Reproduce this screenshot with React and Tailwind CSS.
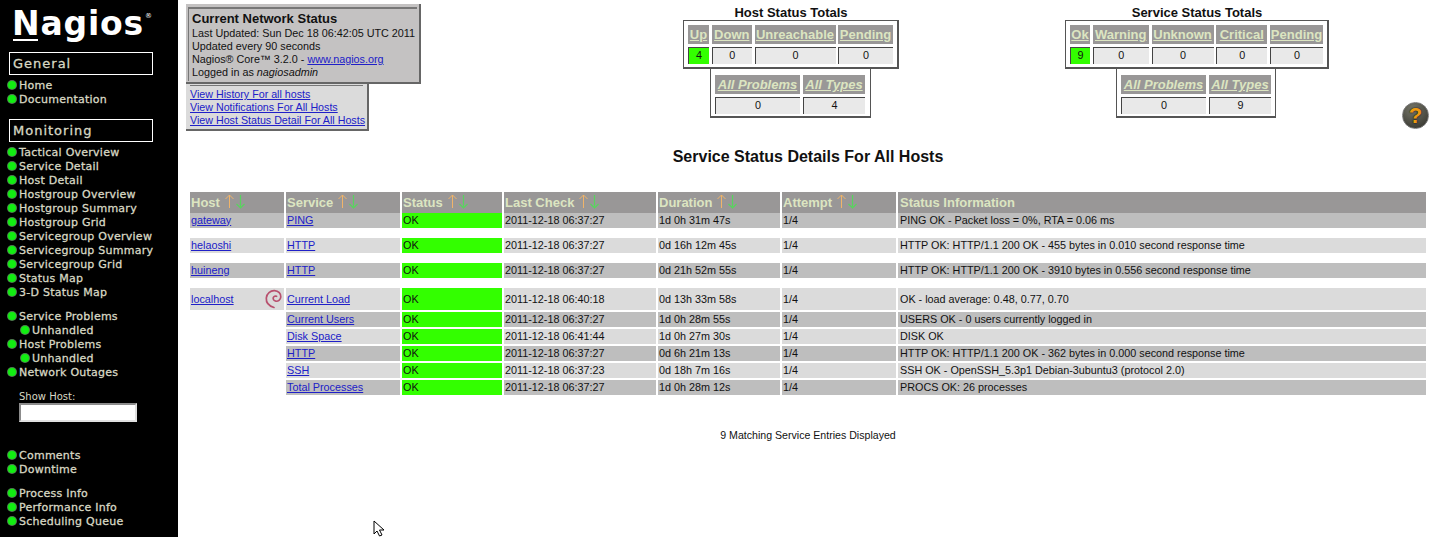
import React from 'react';

const navFont = "font-['DejaVu_Sans',sans-serif]";

const Bullet = () => (
  <span className="w-[8px] h-[8px] rounded-full bg-[#12ee12] shadow-[0_0_0_1px_#4f7f4f] shrink-0 -mt-[3px]"></span>
);

const NavItem = ({ label, sub }) => (
  <div className={`flex items-center h-[14px] gap-[3px] ${sub ? 'pl-[21px]' : 'pl-[8px]'}`}>
    <Bullet />
    <span className="text-[11px] leading-[14px] tracking-[0.25px] [-webkit-text-stroke:0.3px] text-[#d8d8c4] whitespace-nowrap">{label}</span>
  </div>
);

const NavHeader = ({ label }) => (
  <div className="ml-[9px] w-[144px] h-[23px] border border-white flex items-center pl-[3px] text-[13px] tracking-[1px] [-webkit-text-stroke:0.3px] text-[#d8d8c4]">
    {label}
  </div>
);

const Sidebar = () => (
  <div className={`w-[178px] h-[537px] shrink-0 bg-black overflow-hidden ${navFont}`}>
    <div className="relative h-[52px] pl-[12px] pt-[4px]">
      <span className="text-[33px] leading-[40px] font-bold tracking-[0.8px] text-white">Nagios</span>
      <span className="absolute left-[145px] top-[12px] text-[7px] leading-[8px] text-white">®</span>
      <div className="absolute left-[13px] top-[39px] w-[25px] h-[2px] bg-white"></div>
    </div>
    <NavHeader label="General" />
    <div className="mt-[4px]">
      <NavItem label="Home" />
      <NavItem label="Documentation" />
    </div>
    <div className="mt-[12px]">
      <NavHeader label="Monitoring" />
    </div>
    <div className="mt-[4px]">
      {['Tactical Overview', 'Service Detail', 'Host Detail', 'Hostgroup Overview', 'Hostgroup Summary', 'Hostgroup Grid', 'Servicegroup Overview', 'Servicegroup Summary', 'Servicegroup Grid', 'Status Map', '3-D Status Map'].map((l) => (
        <NavItem key={l} label={l} />
      ))}
    </div>
    <div className="mt-[10px]">
      <NavItem label="Service Problems" />
      <NavItem label="Unhandled" sub />
      <NavItem label="Host Problems" />
      <NavItem label="Unhandled" sub />
      <NavItem label="Network Outages" />
    </div>
    <div className="mt-[10px] pl-[19px]">
      <div className="text-[10px] leading-[13px] text-[#d8d8c4]">Show Host:</div>
      <input className="block w-[118px] h-[19px] bg-white border-2 border-t-[#8c8c8c] border-l-[#8c8c8c] border-r-[#e0e0e0] border-b-[#e0e0e0]" />
    </div>
    <div className="mt-[27px]">
      <NavItem label="Comments" />
      <NavItem label="Downtime" />
    </div>
    <div className="mt-[10px]">
      <NavItem label="Process Info" />
      <NavItem label="Performance Info" />
      <NavItem label="Scheduling Queue" />
    </div>
  </div>
);

const Link = ({ children }) => <a href="#" className="text-[#2020c8] underline">{children}</a>;

const InfoBoxes = () => (
  <div className="w-[235px] shrink-0 mt-[4px]">
    <div className="h-[80px] bg-[#c4c2c2] border-r-2 border-b-2 border-[#666] pt-[3px] px-[2px]">
      <div className="border-t-2 border-l border-[#777] pl-[3px] pt-[2px] h-[74px] text-[10.8px] leading-[13px] text-[#111] whitespace-nowrap">
        <div className="text-[13px] leading-[16px] font-bold">Current Network Status</div>
        <div>Last Updated: Sun Dec 18 06:42:05 UTC 2011</div>
        <div>Updated every 90 seconds</div>
        <div>Nagios® Core™ 3.2.0 - <Link>www.nagios.org</Link></div>
        <div>Logged in as <i>nagiosadmin</i></div>
      </div>
    </div>
    <div className="w-[183px] h-[47px] bg-[#dbdbdb] border-r-2 border-b-2 border-[#666] px-[4px] pt-[1px] text-[10.7px] leading-[13px] whitespace-nowrap">
      <div className="border-t border-[#777] pt-[2px]">
        <div><Link>View History For all hosts</Link></div>
        <div><Link>View Notifications For All Hosts</Link></div>
        <div><Link>View Host Status Detail For All Hosts</Link></div>
      </div>
    </div>
  </div>
);

const TotalCell = ({ label, value, width, italic, ok }) => (
  <div className="flex flex-col" style={{ width }}>
    <div className={`h-[19px] bg-[#999797] text-[13px] leading-[20px] font-bold text-center text-[#dce5c1] underline whitespace-nowrap ${italic ? 'italic' : ''}`}>
      {label}
    </div>
    <div className={`mt-[3px] h-[17px] border-t border-l border-[#444] text-[10.8px] leading-[15px] text-center text-[#111] ${ok ? 'bg-[#33ff00]' : 'bg-[#e9e9e9]'}`}>
      {value}
    </div>
  </div>
);

const Totals = ({ title, cells, all, width, allWidth, allLeft, gap }) => (
  <div className="shrink-0" style={{ width }}>
    <div className="h-[20px] pt-[5px] text-[13px] leading-[15px] font-bold text-center text-[#111] whitespace-nowrap">{title}</div>
    <div className="h-[49px] bg-white border border-[#555] border-r-2 border-b-2 pl-[4px] pt-[4px] flex" style={{ gap }}>
      {cells.map((c) => <TotalCell key={c.label} {...c} />)}
    </div>
    <div className="h-[49px] bg-white border-l border-r border-b-2 border-[#555] pl-[4px] pt-[6px] flex gap-[3px]" style={{ width: allWidth, marginLeft: allLeft }}>
      {all.map((c) => <TotalCell key={c.label} italic {...c} />)}
    </div>
  </div>
);

const HelpIcon = () => (
  <div className="shrink-0 ml-[73px] mt-[102px] w-[27px] h-[27px] rounded-full bg-[radial-gradient(circle_at_40%_25%,#77776a,#2e2e28)] border border-[#777] flex items-center justify-center text-[22px] leading-[27px] font-bold text-[#ee9a10] [text-shadow:0_0_2px_#000] font-['Liberation_Sans',sans-serif]">
    ?
  </div>
);

const SortArrows = () => (
  <svg width="24" height="15" viewBox="0 0 24 15" className="ml-[4px] -mt-[2px] shrink-0" fill="none">
    <path d="M5.500 14V1M1.500 5l4-4 4 4" stroke="#f0b46a" strokeWidth="1" />
    <path d="M16.500 1v13M12.500 10l4 4 4-4" stroke="#58d45e" strokeWidth="1.2" />
  </svg>
);

const DebianSwirl = () => (
  <svg width="19" height="21" viewBox="0 0 19 21" className="shrink-0 mr-[1px]" fill="none">
    <path d="M10 18.500C5 17 2 13.500 2.300 9 2.600 4.500 6.500 1.500 10.500 1.700c4 .2 6.600 3 6.300 6.300-.3 3-2.800 4.600-5 4.200-2-.3-3-2-2.500-3.600.5-1.400 2-1.800 3.300-1.300" stroke="#b8506e" strokeWidth="1.700" strokeLinecap="round" />
  </svg>
);

const gridCols = 'grid grid-cols-[94px_114px_100px_152px_122px_114px_528px] gap-x-[2px]';

const headers = ['Host', 'Service', 'Status', 'Last Check', 'Duration', 'Attempt'];

const rows = [
  { host: 'gateway', service: 'PING', check: '2011-12-18 06:37:27', dur: '1d 0h 31m 47s', info: 'PING OK - Packet loss = 0%, RTA = 0.06 ms', dark: true },
  { host: 'helaoshi', service: 'HTTP', check: '2011-12-18 06:37:27', dur: '0d 16h 12m 45s', info: 'HTTP OK: HTTP/1.1 200 OK - 455 bytes in 0.010 second response time', top: true },
  { host: 'huineng', service: 'HTTP', check: '2011-12-18 06:37:27', dur: '0d 21h 52m 55s', info: 'HTTP OK: HTTP/1.1 200 OK - 3910 bytes in 0.556 second response time', dark: true, top: true },
  { host: 'localhost', service: 'Current Load', check: '2011-12-18 06:40:18', dur: '0d 13h 33m 58s', info: 'OK - load average: 0.48, 0.77, 0.70', top: true, tall: true, logo: true },
  { service: 'Current Users', check: '2011-12-18 06:37:27', dur: '1d 0h 28m 55s', info: 'USERS OK - 0 users currently logged in', dark: true },
  { service: 'Disk Space', check: '2011-12-18 06:41:44', dur: '1d 0h 27m 30s', info: 'DISK OK' },
  { service: 'HTTP', check: '2011-12-18 06:37:27', dur: '0d 6h 21m 13s', info: 'HTTP OK: HTTP/1.1 200 OK - 362 bytes in 0.000 second response time', dark: true },
  { service: 'SSH', check: '2011-12-18 06:37:23', dur: '0d 18h 7m 16s', info: 'SSH OK - OpenSSH_5.3p1 Debian-3ubuntu3 (protocol 2.0)' },
  { service: 'Total Processes', check: '2011-12-18 06:37:27', dur: '1d 0h 28m 12s', info: 'PROCS OK: 26 processes', dark: true },
];

const Row = ({ r }) => {
  const bg = r.dark ? 'bg-[#bebebe]' : 'bg-[#dbdbdb]';
  const cell = `${bg} flex items-center whitespace-nowrap ${r.tall ? '' : 'pb-[1px]'}`;
  return (
    <div className={`${gridCols} ${r.top ? 'mt-[10px]' : 'mt-[2px]'} text-[10.8px] leading-[13px] text-[#111] ${r.tall ? 'h-[22px]' : 'h-[15px]'}`}>
      {r.host ? (
        <div className={`${cell} pl-[1px] justify-between`}>
          <Link>{r.host}</Link>
          {r.logo && <DebianSwirl />}
        </div>
      ) : <div></div>}
      <div className={`${cell} pl-[1px]`}><Link>{r.service}</Link></div>
      <div className={`bg-[#33ff00] pl-[1px] flex items-center ${r.tall ? '' : 'pb-[1px]'}`}>OK</div>
      <div className={`${cell} pl-[1px]`}>{r.check}</div>
      <div className={`${cell} pl-[1px]`}>{r.dur}</div>
      <div className={`${cell} pl-[1px]`}>1/4</div>
      <div className={`${cell} pl-[2px]`}>{r.info}</div>
    </div>
  );
};

const StatusTable = () => (
  <div className="ml-[4px] mt-[27px]">
    <div className={`${gridCols} h-[19px]`}>
      {headers.map((h) => (
        <div key={h} className="bg-[#999797] pl-[1px] pt-[1px] flex items-center text-[13px] font-bold text-[#dce5c1]">
          {h}
          <SortArrows />
        </div>
      ))}
      <div className="bg-[#999797] pl-[2px] pt-[1px] flex items-center text-[13px] font-bold text-[#dce5c1]">Status Information</div>
    </div>
    {rows.map((r, i) => <Row key={i} r={r} />)}
  </div>
);

export default function App() {
  return (
    <div className="relative flex w-[1438px] h-[537px] overflow-hidden bg-white font-['Liberation_Sans',sans-serif]">
      <Sidebar />
      <div className="flex-1 pl-[8px]">
        <div className="flex h-[137px]">
          <InfoBoxes />
          <div className="ml-[262px]">
            <Totals
              title="Host Status Totals"
              width={216}
              allWidth={161}
              allLeft={27}
              gap={2.5}
              cells={[
                { label: 'Up', value: '4', width: 21, ok: true },
                { label: 'Down', value: '0', width: 40.5 },
                { label: 'Unreachable', value: '0', width: 81 },
                { label: 'Pending', value: '0', width: 55 },
              ]}
              all={[
                { label: 'All Problems', value: '0', width: 85 },
                { label: 'All Types', value: '4', width: 62 },
              ]}
            />
          </div>
          <div className="ml-[166px]">
            <Totals
              title="Service Status Totals"
              width={264}
              allWidth={160}
              allLeft={51}
              gap={2.75}
              cells={[
                { label: 'Ok', value: '9', width: 20, ok: true },
                { label: 'Warning', value: '0', width: 56 },
                { label: 'Unknown', value: '0', width: 62 },
                { label: 'Critical', value: '0', width: 51 },
                { label: 'Pending', value: '0', width: 53 },
              ]}
              all={[
                { label: 'All Problems', value: '0', width: 85 },
                { label: 'All Types', value: '9', width: 62 },
              ]}
            />
          </div>
          <HelpIcon />
        </div>
        <div className="h-[28px] pt-[11px] text-[16px] leading-[18px] font-bold text-center text-[#111] w-[1244px]">
          Service Status Details For All Hosts
        </div>
        <StatusTable />
        <div className="mt-[33px] text-[10.6px] leading-[14px] text-center text-[#111] w-[1244px]">
          9 Matching Service Entries Displayed
        </div>
      </div>
      <svg width="14" height="18" viewBox="0 0 14 18" className="absolute left-[373px] top-[520px]" fill="white" stroke="black" strokeWidth="1">
        <path d="M1 1v13l3-3 2.500 5 2.500-1-2.500-5h4.500z" />
      </svg>
    </div>
  );
}
